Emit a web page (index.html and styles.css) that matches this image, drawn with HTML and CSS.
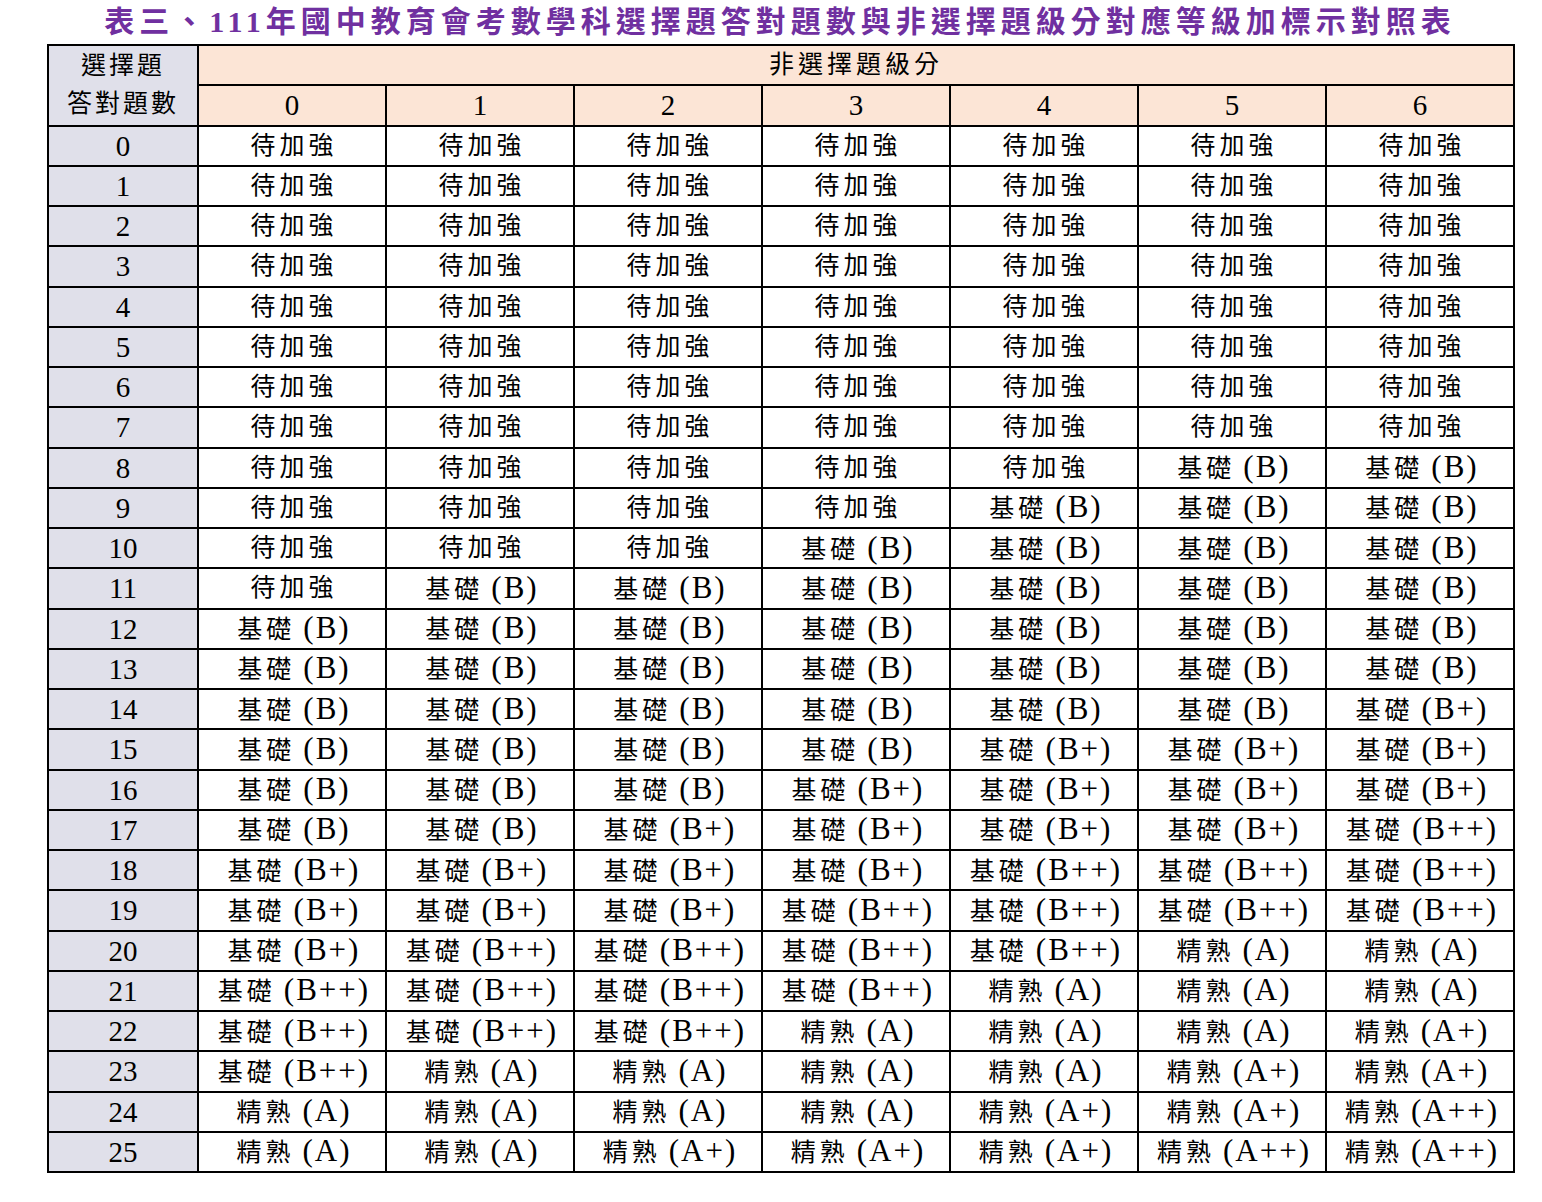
FILE: index.html
```html
<!DOCTYPE html>
<html lang="zh-Hant">
<head>
<meta charset="utf-8">
<title>111年國中教育會考數學科對照表</title>
<link rel="stylesheet" href="styles.css">
</head>
<body>
<div class="page">
  <h1 class="title">表三、111年國中教育會考數學科選擇題答對題數與非選擇題級分對應等級加標示對照表</h1>
  <table class="grid">
    <colgroup>
      <col class="col-first">
      <col class="col"><col class="col"><col class="col"><col class="col"><col class="col"><col class="col"><col class="col">
    </colgroup>
    <thead>
      <tr>
        <th class="corner" rowspan="2">選擇題<br>答對題數</th>
        <th class="head" colspan="7">非選擇題級分</th>
      </tr>
      <tr>
        <th class="head num">0</th><th class="head num">1</th><th class="head num">2</th><th class="head num">3</th><th class="head num">4</th><th class="head num">5</th><th class="head num">6</th>
      </tr>
    </thead>
    <tbody>
      <tr><th class="side">0</th><td>待加強</td><td>待加強</td><td>待加強</td><td>待加強</td><td>待加強</td><td>待加強</td><td>待加強</td></tr>
      <tr><th class="side">1</th><td>待加強</td><td>待加強</td><td>待加強</td><td>待加強</td><td>待加強</td><td>待加強</td><td>待加強</td></tr>
      <tr><th class="side">2</th><td>待加強</td><td>待加強</td><td>待加強</td><td>待加強</td><td>待加強</td><td>待加強</td><td>待加強</td></tr>
      <tr><th class="side">3</th><td>待加強</td><td>待加強</td><td>待加強</td><td>待加強</td><td>待加強</td><td>待加強</td><td>待加強</td></tr>
      <tr><th class="side">4</th><td>待加強</td><td>待加強</td><td>待加強</td><td>待加強</td><td>待加強</td><td>待加強</td><td>待加強</td></tr>
      <tr><th class="side">5</th><td>待加強</td><td>待加強</td><td>待加強</td><td>待加強</td><td>待加強</td><td>待加強</td><td>待加強</td></tr>
      <tr><th class="side">6</th><td>待加強</td><td>待加強</td><td>待加強</td><td>待加強</td><td>待加強</td><td>待加強</td><td>待加強</td></tr>
      <tr><th class="side">7</th><td>待加強</td><td>待加強</td><td>待加強</td><td>待加強</td><td>待加強</td><td>待加強</td><td>待加強</td></tr>
      <tr><th class="side">8</th><td>待加強</td><td>待加強</td><td>待加強</td><td>待加強</td><td>待加強</td><td>基礎<span class="lv">(B)</span></td><td>基礎<span class="lv">(B)</span></td></tr>
      <tr><th class="side">9</th><td>待加強</td><td>待加強</td><td>待加強</td><td>待加強</td><td>基礎<span class="lv">(B)</span></td><td>基礎<span class="lv">(B)</span></td><td>基礎<span class="lv">(B)</span></td></tr>
      <tr><th class="side">10</th><td>待加強</td><td>待加強</td><td>待加強</td><td>基礎<span class="lv">(B)</span></td><td>基礎<span class="lv">(B)</span></td><td>基礎<span class="lv">(B)</span></td><td>基礎<span class="lv">(B)</span></td></tr>
      <tr><th class="side">11</th><td>待加強</td><td>基礎<span class="lv">(B)</span></td><td>基礎<span class="lv">(B)</span></td><td>基礎<span class="lv">(B)</span></td><td>基礎<span class="lv">(B)</span></td><td>基礎<span class="lv">(B)</span></td><td>基礎<span class="lv">(B)</span></td></tr>
      <tr><th class="side">12</th><td>基礎<span class="lv">(B)</span></td><td>基礎<span class="lv">(B)</span></td><td>基礎<span class="lv">(B)</span></td><td>基礎<span class="lv">(B)</span></td><td>基礎<span class="lv">(B)</span></td><td>基礎<span class="lv">(B)</span></td><td>基礎<span class="lv">(B)</span></td></tr>
      <tr><th class="side">13</th><td>基礎<span class="lv">(B)</span></td><td>基礎<span class="lv">(B)</span></td><td>基礎<span class="lv">(B)</span></td><td>基礎<span class="lv">(B)</span></td><td>基礎<span class="lv">(B)</span></td><td>基礎<span class="lv">(B)</span></td><td>基礎<span class="lv">(B)</span></td></tr>
      <tr><th class="side">14</th><td>基礎<span class="lv">(B)</span></td><td>基礎<span class="lv">(B)</span></td><td>基礎<span class="lv">(B)</span></td><td>基礎<span class="lv">(B)</span></td><td>基礎<span class="lv">(B)</span></td><td>基礎<span class="lv">(B)</span></td><td>基礎<span class="lv">(B+)</span></td></tr>
      <tr><th class="side">15</th><td>基礎<span class="lv">(B)</span></td><td>基礎<span class="lv">(B)</span></td><td>基礎<span class="lv">(B)</span></td><td>基礎<span class="lv">(B)</span></td><td>基礎<span class="lv">(B+)</span></td><td>基礎<span class="lv">(B+)</span></td><td>基礎<span class="lv">(B+)</span></td></tr>
      <tr><th class="side">16</th><td>基礎<span class="lv">(B)</span></td><td>基礎<span class="lv">(B)</span></td><td>基礎<span class="lv">(B)</span></td><td>基礎<span class="lv">(B+)</span></td><td>基礎<span class="lv">(B+)</span></td><td>基礎<span class="lv">(B+)</span></td><td>基礎<span class="lv">(B+)</span></td></tr>
      <tr><th class="side">17</th><td>基礎<span class="lv">(B)</span></td><td>基礎<span class="lv">(B)</span></td><td>基礎<span class="lv">(B+)</span></td><td>基礎<span class="lv">(B+)</span></td><td>基礎<span class="lv">(B+)</span></td><td>基礎<span class="lv">(B+)</span></td><td>基礎<span class="lv">(B++)</span></td></tr>
      <tr><th class="side">18</th><td>基礎<span class="lv">(B+)</span></td><td>基礎<span class="lv">(B+)</span></td><td>基礎<span class="lv">(B+)</span></td><td>基礎<span class="lv">(B+)</span></td><td>基礎<span class="lv">(B++)</span></td><td>基礎<span class="lv">(B++)</span></td><td>基礎<span class="lv">(B++)</span></td></tr>
      <tr><th class="side">19</th><td>基礎<span class="lv">(B+)</span></td><td>基礎<span class="lv">(B+)</span></td><td>基礎<span class="lv">(B+)</span></td><td>基礎<span class="lv">(B++)</span></td><td>基礎<span class="lv">(B++)</span></td><td>基礎<span class="lv">(B++)</span></td><td>基礎<span class="lv">(B++)</span></td></tr>
      <tr><th class="side">20</th><td>基礎<span class="lv">(B+)</span></td><td>基礎<span class="lv">(B++)</span></td><td>基礎<span class="lv">(B++)</span></td><td>基礎<span class="lv">(B++)</span></td><td>基礎<span class="lv">(B++)</span></td><td>精熟<span class="lv">(A)</span></td><td>精熟<span class="lv">(A)</span></td></tr>
      <tr><th class="side">21</th><td>基礎<span class="lv">(B++)</span></td><td>基礎<span class="lv">(B++)</span></td><td>基礎<span class="lv">(B++)</span></td><td>基礎<span class="lv">(B++)</span></td><td>精熟<span class="lv">(A)</span></td><td>精熟<span class="lv">(A)</span></td><td>精熟<span class="lv">(A)</span></td></tr>
      <tr><th class="side">22</th><td>基礎<span class="lv">(B++)</span></td><td>基礎<span class="lv">(B++)</span></td><td>基礎<span class="lv">(B++)</span></td><td>精熟<span class="lv">(A)</span></td><td>精熟<span class="lv">(A)</span></td><td>精熟<span class="lv">(A)</span></td><td>精熟<span class="lv">(A+)</span></td></tr>
      <tr><th class="side">23</th><td>基礎<span class="lv">(B++)</span></td><td>精熟<span class="lv">(A)</span></td><td>精熟<span class="lv">(A)</span></td><td>精熟<span class="lv">(A)</span></td><td>精熟<span class="lv">(A)</span></td><td>精熟<span class="lv">(A+)</span></td><td>精熟<span class="lv">(A+)</span></td></tr>
      <tr><th class="side">24</th><td>精熟<span class="lv">(A)</span></td><td>精熟<span class="lv">(A)</span></td><td>精熟<span class="lv">(A)</span></td><td>精熟<span class="lv">(A)</span></td><td>精熟<span class="lv">(A+)</span></td><td>精熟<span class="lv">(A+)</span></td><td>精熟<span class="lv">(A++)</span></td></tr>
      <tr><th class="side">25</th><td>精熟<span class="lv">(A)</span></td><td>精熟<span class="lv">(A)</span></td><td>精熟<span class="lv">(A+)</span></td><td>精熟<span class="lv">(A+)</span></td><td>精熟<span class="lv">(A+)</span></td><td>精熟<span class="lv">(A++)</span></td><td>精熟<span class="lv">(A++)</span></td></tr>
    </tbody>
  </table>
</div>
</body>
</html>
```

FILE: styles.css
```css
html, body {
  margin: 0;
  padding: 0;
  background: #ffffff;
}

.page {
  width: 1466px;
  margin-left: 47px;
  padding-top: 4px;
}

.title {
  margin: 0;
  height: 40px;
  line-height: 36px;
  text-align: center;
  font-family: "Liberation Serif", "Noto Sans CJK TC", serif;
  font-size: 30px;
  font-weight: 700;
  letter-spacing: 5px;
  color: #7030a0;
  white-space: nowrap;
}

.grid {
  table-layout: fixed;
  width: 1466px;
  border-collapse: collapse;
  border: 2px solid #000;
  font-family: "Liberation Serif", "Noto Sans CJK TC", serif;
  color: #000;
}

.col-first { width: 150px; }
.col { width: 188px; }

.grid tr {
  height: 40.25px;
}

.grid th,
.grid td {
  border: 2px solid #000;
  padding: 0;
  text-align: center;
  vertical-align: middle;
  font-weight: 400;
  white-space: nowrap;
  line-height: 30px;
}

.grid td {
  font-size: 25px;
  letter-spacing: 4px;
  text-indent: 4px;
}

.lv {
  font-family: "Liberation Serif", serif;
  font-size: 31px;
  letter-spacing: 2px;
  margin-left: 8px;
  line-height: 1;
}

.corner {
  background: #e0e0ea;
  font-size: 25px;
  letter-spacing: 3px;
  line-height: 38px !important;
}

.head {
  background: #fce5d6;
  font-size: 25px;
  letter-spacing: 4px;
}

.head.num {
  font-size: 29px;
  letter-spacing: 0;
}

.side {
  background: #e0e0ea;
  font-size: 29px;
}
```
